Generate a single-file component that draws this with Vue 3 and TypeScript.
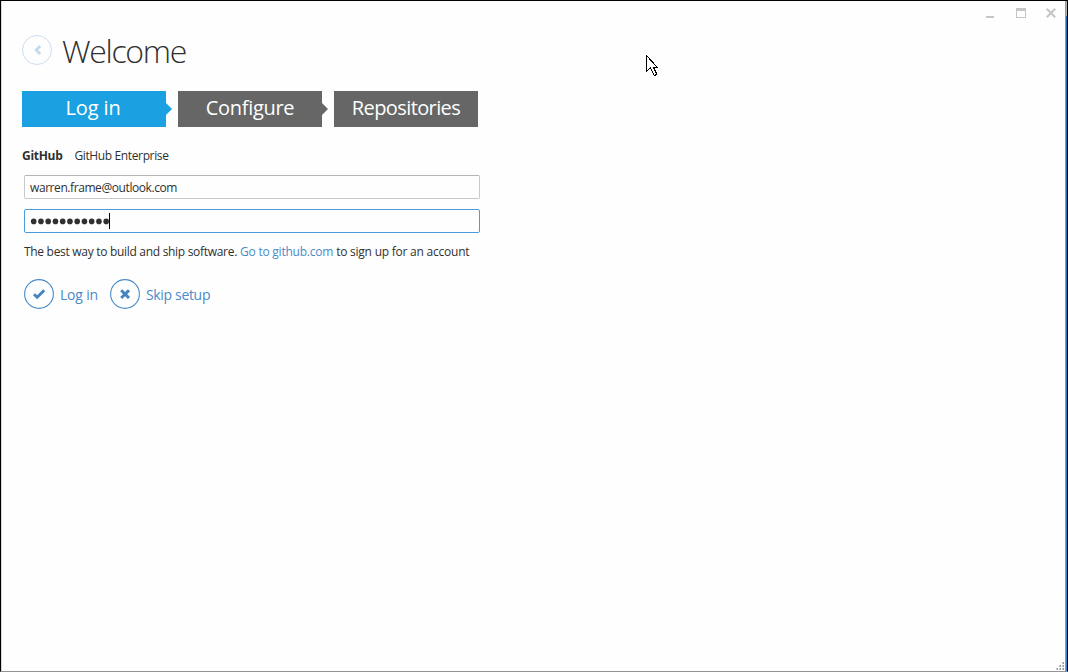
<script setup lang="ts">
import { ref } from 'vue'

interface Step {
  label: string
  active: boolean
}

const steps: Step[] = [
  { label: 'Log in', active: true },
  { label: 'Configure', active: false },
  { label: 'Repositories', active: false },
]
const email = ref('warren.frame@outlook.com')
const passwordLength = 11
const grip = [[6, 0], [3, 3], [6, 3], [0, 6], [3, 6], [6, 6]]
</script>

<template>
  <div class="window">
    <div class="edge"></div>
    <div class="controls">
      <svg width="82" height="12" viewBox="0 0 82 12" shape-rendering="crispEdges">
        <rect x="0" y="9" width="8" height="2" fill="#c6c6c6" />
        <path d="M30 1h10v10h-10zM31 4v6h8v-6z" fill="#c6c6c6" fill-rule="evenodd" />
        <path d="M60.8 1.8l8.4 8.4M69.2 1.8l-8.4 8.4" stroke="#c6c6c6" stroke-width="2.2" fill="none" shape-rendering="auto" />
      </svg>
    </div>

    <header class="header">
      <svg class="back" width="30" height="30" viewBox="0 0 30 30">
        <circle cx="15" cy="15" r="14.5" fill="none" stroke="#cbdcee" />
        <path d="M18.2 11L14.2 15l4 4" fill="none" stroke="#c6d9ee" stroke-width="2.8" />
      </svg>
      <h1>Welcome</h1>
    </header>

    <nav class="steps">
      <div v-for="(s, i) in steps" :key="s.label" class="step" :class="['step-' + i, { active: s.active }]">
        <span>{{ s.label }}</span>
      </div>
    </nav>

    <div class="tabs">
      <span class="tab selected">GitHub</span>
      <span class="tab enterprise">GitHub Enterprise</span>
    </div>

    <form class="form" @submit.prevent>
      <div class="field"><span class="email">{{ email }}</span></div>
      <div class="field focused">
        <svg class="dots" width="79" height="22" viewBox="0 0 79 22">
          <circle v-for="n in passwordLength" :key="n" :cx="3.7 + (n - 1) * 7.25" cy="11.4" r="2.8" fill="#303030" />
        </svg>
        <i class="caret"></i>
      </div>
    </form>

    <p class="hint">
      <span>The best way to build and ship software.</span>
      <a>Go to github.com</a>
      <span class="signup">to sign up for an account</span>
    </p>

    <div class="actions">
      <svg width="30" height="30" viewBox="0 0 30 30">
        <circle cx="15" cy="15" r="14.4" fill="none" stroke="#4a8bc8" stroke-width="1.1" />
        <path d="M10 15.2l3.2 3.1 7-7" fill="none" stroke="#4583c0" stroke-width="2.9" />
      </svg>
      <span class="action login">Log in</span>
      <svg width="30" height="30" viewBox="0 0 30 30">
        <circle cx="15" cy="15" r="14.4" fill="none" stroke="#4a8bc8" stroke-width="1.1" />
        <path d="M11.2 11.2l7.8 7.8M19 11.2l-7.8 7.8" fill="none" stroke="#4583c0" stroke-width="3" />
      </svg>
      <span class="action skip">Skip setup</span>
    </div>

    <svg class="grip" width="8" height="8" shape-rendering="crispEdges">
      <g v-for="g in grip" :key="g.join()">
        <rect :x="g[0]" :y="g[1]" width="2" height="2" fill="#c8c8c8" />
        <rect :x="g[0] + 1" :y="g[1]" width="1" height="2" fill="#9a9a9a" />
      </g>
    </svg>
    <svg class="cursor" width="13" height="22" viewBox="0 0 13 22" shape-rendering="crispEdges">
      <path d="M.5 .5v16l4-4 3 7 1 1 2-1v-1l-3-6h4z" fill="#fff" stroke="#000" />
    </svg>
  </div>
</template>

<style>
body {
  margin: 0;
  overflow: hidden;
}
</style>

<style scoped>
.window {
  position: relative;
  box-sizing: border-box;
  width: 1068px;
  height: 672px;
  padding: 34px 0 0 20px;
  border-top: 1px solid #000;
  border-left: 1px solid #000;
  border-right: 1px solid #000;
  border-bottom: 1px solid #949494;
  box-shadow: inset 1px 0 #d9d9d9;
  background: #fefefe;
  color: #303030;
  font-family: "Open Sans", "Noto Sans", sans-serif;
  overflow: hidden;
}
.edge {
  position: absolute;
  top: 0;
  right: 0;
  bottom: 0;
  width: 1px;
  border-left: 1px solid #979797;
  background: linear-gradient(#b4b4b4 0 15px, #1467b8 15px 100px, #2f86dc);
}
.controls {
  position: absolute;
  top: 6px;
  left: 985px;
}
.controls svg {
  display: block;
}
.header {
  display: flex;
  height: 56px;
  margin-left: 1px;
}
.header .back {
  flex: none;
}
h1 {
  margin: -7px 0 0 10px;
  font-size: 32px;
  font-weight: 300;
  line-height: 46px;
  letter-spacing: -1.3px;
}
.steps {
  display: flex;
  gap: 12px;
  margin-left: 1px;
}
.step {
  position: relative;
  width: 144px;
  height: 36px;
  background: #666;
  color: #fff;
  font-size: 20px;
  line-height: 34px;
  text-align: center;
  letter-spacing: -0.3px;
}
.step-2 {
  letter-spacing: -0.6px;
}
.step.active {
  background: #1ba1e2;
  letter-spacing: -0.1px;
  text-indent: -2px;
}
.step:not(:last-child)::after {
  content: "";
  position: absolute;
  left: 144px;
  top: 12px;
  border: 6px solid transparent;
  border-left-color: #666;
  border-right: 0;
}
.step.active::after {
  border-left-color: #1ba1e2;
}
.tabs {
  display: flex;
  gap: 12px;
  margin: 19px 0 0 1px;
  font-size: 12px;
  line-height: 20px;
}
.tab {
  letter-spacing: -0.3px;
}
.enterprise {
  letter-spacing: -0.37px;
}
.selected {
  font-weight: 700;
}
.form {
  display: grid;
  gap: 10px;
  width: 456px;
  margin: 9px 0 0 3px;
}
.field {
  display: flex;
  align-items: center;
  box-sizing: border-box;
  height: 24px;
  padding-left: 5px;
  border: 1px solid #c9c9c9;
  border-top-color: #b5b5b5;
  border-radius: 2px;
  font-size: 12px;
  letter-spacing: -0.42px;
}
.focused {
  border-color: #4a9bdb;
}
.dots {
  flex: none;
  overflow: visible;
}
.caret {
  width: 1px;
  height: 16px;
  background: #000;
}
.hint {
  display: flex;
  gap: 3px;
  margin: 9px 0 0 3px;
  font-size: 12px;
  line-height: 20px;
  letter-spacing: -0.3px;
  white-space: nowrap;
}
.hint a {
  color: #4a8bc8;
  letter-spacing: -0.23px;
}
.hint .signup {
  letter-spacing: -0.23px;
}
.actions {
  display: flex;
  margin: 17px 0 0 3px;
}
.action {
  margin: 0 12px 0 6px;
  color: #4a8bc8;
  font-size: 14px;
  line-height: 32px;
  letter-spacing: -0.2px;
}
.skip {
  letter-spacing: -0.32px;
}
.grip {
  position: absolute;
  left: 1055px;
  top: 661px;
}
.cursor {
  position: absolute;
  left: 645px;
  top: 54px;
}
</style>
